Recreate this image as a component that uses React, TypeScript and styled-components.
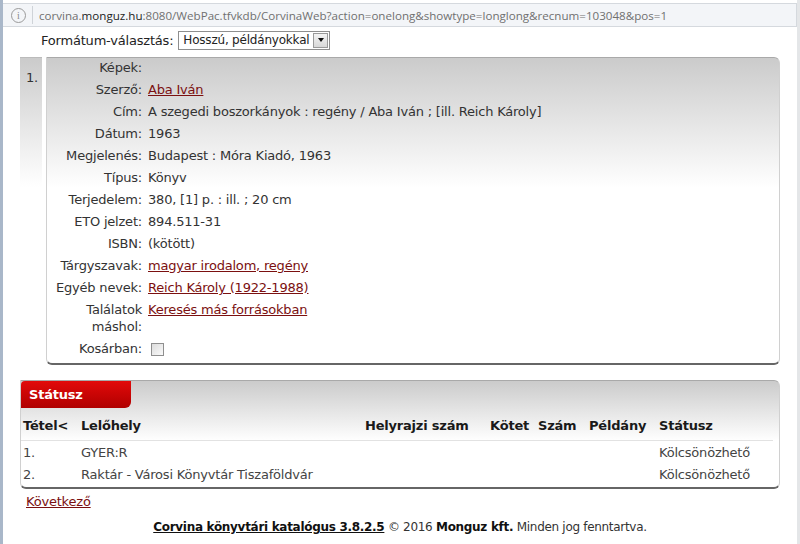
import styled, { createGlobalStyle } from 'styled-components';

//#region styled
const GlobalStyle = createGlobalStyle`
  html, body {
    margin: 0;
    padding: 0;
    background: #fff;
  }
  body {
    font-family: Verdana, 'DejaVu Sans', sans-serif;
    font-size: 13px;
    letter-spacing: -0.2px;
    color: #333;
  }
`;

const Window = styled.div`
  width: 800px;
  height: 544px;
  box-sizing: border-box;
  border-left: 3px solid #a9b7c9;
  border-right: 3px solid #e4e6e8;
  overflow: hidden;
  background: #fff;
`;

const AddressBar = styled.div`
  display: flex;
  align-items: center;
  height: 24px;
  margin-top: 3px;
  box-sizing: border-box;
  background: #f3f5f8;
  border: 1px solid #d5d9de;
  border-left: none;
  font-family: 'Open Sans', 'Noto Sans', sans-serif;
  font-size: 11.6px;
  letter-spacing: 0;
  color: #707070;
`;

const InfoIcon = styled.span`
  display: inline-flex;
  align-items: center;
  justify-content: center;
  width: 13px;
  height: 13px;
  margin-left: 8px;
  border: 1px solid #9a9a9a;
  border-radius: 50%;
  font-family: 'Liberation Serif', serif;
  font-size: 10px;
  color: #8a8a8a;
`;

const Separator = styled.span`
  width: 1px;
  height: 18px;
  margin: 0 6px 0 6px;
  background: #cfd3d8;
`;

const Host = styled.span`
  color: #1e1e1e;
`;

const FormatRow = styled.div`
  display: flex;
  align-items: center;
  gap: 5px;
  height: 26px;
  padding-left: 38px;
  color: #222;
`;

const FakeSelect = styled.div`
  display: flex;
  align-items: center;
  height: 19px;
  box-sizing: border-box;
  border: 1px solid #8e8e8e;
  background: #fff;
  padding-left: 4px;
  font-size: 12px;
  color: #222;
`;

const SelectArrow = styled.span`
  display: flex;
  align-items: center;
  justify-content: center;
  width: 15px;
  height: 15px;
  margin: 0 1px 0 4px;
  border: 1px solid #9a9a9a;
  box-sizing: border-box;
  background: linear-gradient(#f4f4f4, #d8d8d8);

  &::after {
    content: '';
    border-left: 3.5px solid transparent;
    border-right: 3.5px solid transparent;
    border-top: 4px solid #111;
  }
`;

const Record = styled.div`
  display: flex;
  gap: 4px;
  margin: 4px 17px 0 17px;
`;

const RecordNumber = styled.div`
  width: 22px;
  height: 130px;
  box-sizing: border-box;
  padding: 12px 0 0 6px;
  background: linear-gradient(#cbcbcb, #ffffff);
  border-top: 1px solid #bbb;
  color: #333;
`;

const RecordCard = styled.div`
  flex: 1;
  display: grid;
  grid-template-columns: 95px 1fr;
  column-gap: 6px;
  padding-bottom: 2px;
  background: linear-gradient(#cbcbcb, #ffffff 130px);
  border: 1px solid #d0d0d0;
  border-top-color: #a9a9a9;
  border-bottom: 2px solid #666;
  border-radius: 0 6px 6px 6px;
`;

const Label = styled.div`
  text-align: right;
  padding: 1px 0 4px;
  line-height: 17px;
`;

const Value = styled.div`
  display: flex;
  align-items: flex-start;
  min-height: 17px;
  padding: 1px 0 4px;
  line-height: 17px;
`;

const Link = styled.a`
  color: #7b1010;
  text-decoration: underline;
`;

const Checkbox = styled.span`
  display: block;
  width: 11px;
  height: 11px;
  margin: 3px 0 0 3px;
  border: 1px solid #8f8f8f;
  background: linear-gradient(135deg, #dcdcdc, #fafafa);
`;

const Holdings = styled.div`
  margin: 15px 17px 0 17px;
  padding-bottom: 2px;
  background: linear-gradient(#cbcbcb, #ffffff 60px);
  border: 1px solid #d0d0d0;
  border-top-color: #a9a9a9;
  border-bottom: 2px solid #666;
  border-radius: 0 6px 6px 6px;
`;

const Tab = styled.div`
  width: 110px;
  height: 27px;
  box-sizing: border-box;
  padding: 6px 0 0 8px;
  background: linear-gradient(#e20a0a, #b00000);
  border-radius: 4px 0 6px 0;
  color: #fff;
  font-weight: bold;
`;

const Table = styled.table`
  width: 752px;
  border-collapse: collapse;
  table-layout: fixed;
`;

const HeadCell = styled.th<{ $w: number }>`
  box-sizing: border-box;
  width: ${(p) => p.$w}px;
  padding: 9px 0 6px 2px;
  text-align: left;
  font-weight: bold;
  color: #1a1a1a;
  line-height: 17px;
  border-bottom: 1px solid #e2e2e2;
  white-space: nowrap;
`;

const Cell = styled.td`
  padding: 0 0 0 2px;
  height: 22px;
  line-height: 17px;
  color: #444;
  white-space: nowrap;
`;

const NextLink = styled(Link)`
  display: inline-block;
  margin: 5px 0 0 23px;
`;

const Footer = styled.div`
  margin-top: 11px;
  text-align: center;
  font-size: 12px;
  letter-spacing: -0.3px;
  color: #333;

  b {
    color: #111;
  }
`;

const FooterLink = styled.a`
  color: #111;
  font-weight: bold;
  text-decoration: underline;
`;
//#endregion

const fields: [string, React.ReactNode][] = [
  ['Képek:', ''],
  ['Szerző:', <Link>Aba Iván</Link>],
  ['Cím:', 'A szegedi boszorkányok : regény / Aba Iván ; [ill. Reich Károly]'],
  ['Dátum:', '1963'],
  ['Megjelenés:', 'Budapest : Móra Kiadó, 1963'],
  ['Típus:', 'Könyv'],
  ['Terjedelem:', '380, [1] p. : ill. ; 20 cm'],
  ['ETO jelzet:', '894.511-31'],
  ['ISBN:', '(kötött)'],
  ['Tárgyszavak:', <Link>magyar irodalom, regény</Link>],
  ['Egyéb nevek:', <Link>Reich Károly (1922-1988)</Link>],
  ['Találatok máshol:', <Link>Keresés más forrásokban</Link>],
  ['Kosárban:', <Checkbox />],
];

const columns: [string, number][] = [
  ['Tétel<', 58],
  ['Lelőhely', 284],
  ['Helyrajzi szám', 125],
  ['Kötet', 48],
  ['Szám', 51],
  ['Példány', 70],
  ['Státusz', 116],
];

const items = [
  ['1.', 'GYER:R'],
  ['2.', 'Raktár - Városi Könyvtár Tiszaföldvár'],
];

const App = () => {
  return (
    <Window>
      <GlobalStyle />
      <AddressBar>
        <InfoIcon>i</InfoIcon>
        <Separator />
        <span>
          corvina.<Host>monguz.hu</Host>
          :8080/WebPac.tfvkdb/CorvinaWeb?action=onelong&amp;showtype=longlong&amp;recnum=103048&amp;pos=1
        </span>
      </AddressBar>

      <FormatRow>
        <span>Formátum-választás:</span>
        <FakeSelect>
          Hosszú, példányokkal
          <SelectArrow />
        </FakeSelect>
      </FormatRow>

      <Record>
        <RecordNumber>1.</RecordNumber>
        <RecordCard>
          {fields.map(([label, value]) => (
            <>
              <Label key={label}>{label}</Label>
              <Value>{value}</Value>
            </>
          ))}
        </RecordCard>
      </Record>

      <Holdings>
        <Tab>Státusz</Tab>
        <Table>
          <thead>
            <tr>
              {columns.map(([name, w]) => (
                <HeadCell key={name} $w={w}>
                  {name}
                </HeadCell>
              ))}
            </tr>
          </thead>
          <tbody>
            {items.map(([n, place]) => (
              <tr key={n}>
                <Cell>{n}</Cell>
                <Cell>{place}</Cell>
                <Cell />
                <Cell />
                <Cell />
                <Cell />
                <Cell>Kölcsönözhető</Cell>
              </tr>
            ))}
          </tbody>
        </Table>
      </Holdings>

      <NextLink>Következő</NextLink>

      <Footer>
        <FooterLink>Corvina könyvtári katalógus 3.8.2.5</FooterLink> © 2016{' '}
        <b>Monguz kft.</b> Minden jog fenntartva.
      </Footer>
    </Window>
  );
};

export default App;
